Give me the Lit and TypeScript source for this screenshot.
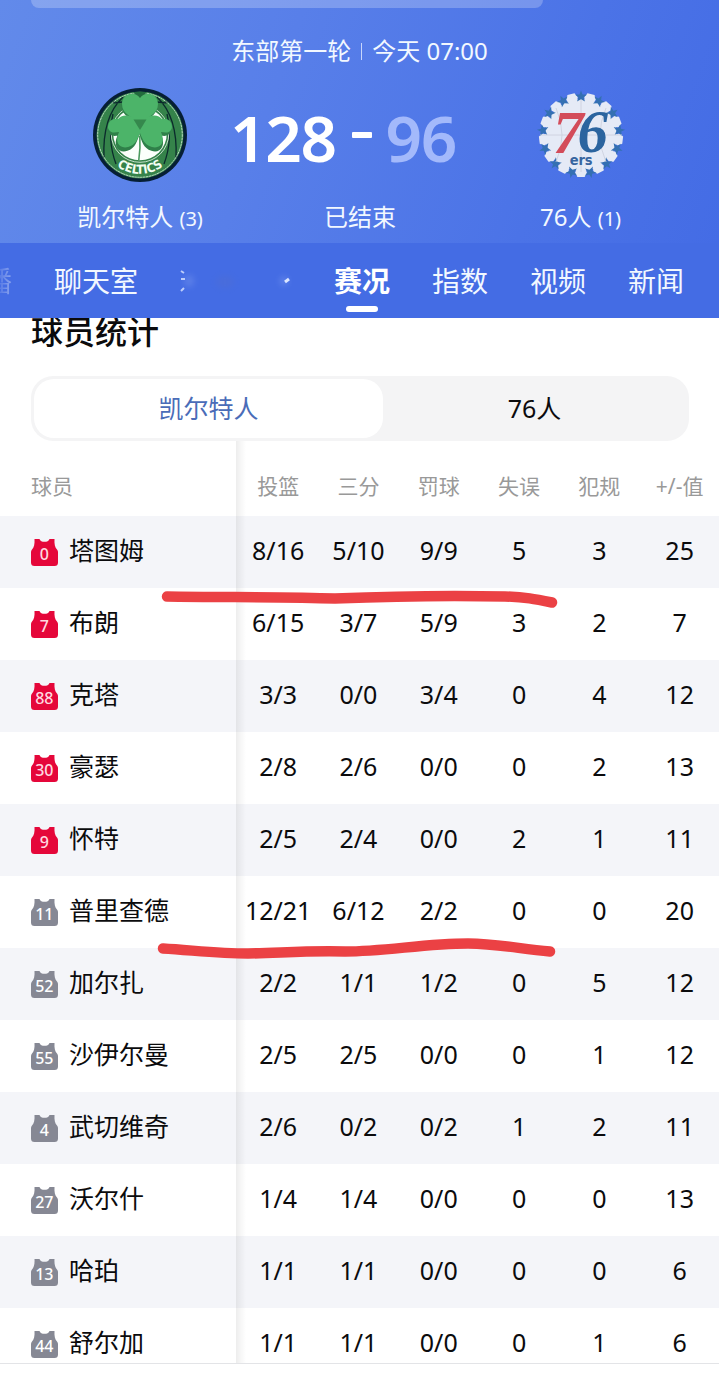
import { LitElement, css, html, svg } from 'lit';
import { customElement, property } from 'lit/decorators.js';
import { classMap } from 'lit/directives/class-map.js';

interface Player {
  num: number;
  name: string;
  stats: string[];
  starter?: boolean;
}

const COLUMNS = ['投篮', '三分', '罚球', '失误', '犯规', '+/-值'];

const PLAYERS: Player[] = [
  { num: 0, name: '塔图姆', stats: ['8/16', '5/10', '9/9', '5', '3', '25'], starter: true },
  { num: 7, name: '布朗', stats: ['6/15', '3/7', '5/9', '3', '2', '7'], starter: true },
  { num: 88, name: '克塔', stats: ['3/3', '0/0', '3/4', '0', '4', '12'], starter: true },
  { num: 30, name: '豪瑟', stats: ['2/8', '2/6', '0/0', '0', '2', '13'], starter: true },
  { num: 9, name: '怀特', stats: ['2/5', '2/4', '0/0', '2', '1', '11'], starter: true },
  { num: 11, name: '普里查德', stats: ['12/21', '6/12', '2/2', '0', '0', '20'] },
  { num: 52, name: '加尔扎', stats: ['2/2', '1/1', '1/2', '0', '5', '12'] },
  { num: 55, name: '沙伊尔曼', stats: ['2/5', '2/5', '0/0', '0', '1', '12'] },
  { num: 4, name: '武切维奇', stats: ['2/6', '0/2', '0/2', '1', '2', '11'] },
  { num: 27, name: '沃尔什', stats: ['1/4', '1/4', '0/0', '0', '0', '13'] },
  { num: 13, name: '哈珀', stats: ['1/1', '1/1', '0/0', '0', '0', '6'] },
  { num: 44, name: '舒尔加', stats: ['1/1', '1/1', '0/0', '0', '1', '6'] },
];

@customElement('celtics-logo')
export class CelticsLogo extends LitElement {
  render() {
    return html`
      <svg viewBox="8 8 94 94" width="94" height="94">
        <circle cx="55" cy="55" r="47" fill="#061f35" />
        <circle cx="55" cy="55" r="43.5" fill="#35834a" />
        <g fill="none" stroke="#0b2b2c" stroke-width="1.3">
          <path d="M38 17 Q17 37 19 78 M30 21 Q24 24 38 22" />
          <path d="M72 17 Q93 37 91 78 M80 21 Q86 24 72 22" />
          <path d="M28 34 Q22 60 31 84 M82 34 Q88 60 79 84" />
        </g>
        <circle cx="55" cy="55" r="42.3" fill="none" stroke="#dff0e2" stroke-width="0.8" stroke-dasharray="2.4 0.5" />
        <circle cx="55" cy="53.5" r="28.8" fill="#35834a" stroke="#e9f5ea" stroke-width="0.8" />
        <circle cx="55" cy="53.500" r="26.8" fill="#fbfffb" />
        <g fill="#2f8049" transform="translate(-0.6 1.8)">
          <path d="M55 18 C49 10 37 14 37 24 C37 34 47 37 55 42 C63 37 73 34 73 24 C73 14 61 10 55 18Z" />
          <path d="M55 46 C46 32 36 35 33 40 C25 40 21 48 25 52 C28 55 31 54 33 54 C28 65 35 72 43 69 C51 67 53 58 55 53Z" />
          <path d="M55 46 C64 32 74 35 77 40 C85 40 89 48 85 52 C82 55 79 54 77 54 C82 65 75 72 67 69 C59 67 57 58 55 53Z" />
        </g>
        <path d="M48 12 H62 L55 19Z" fill="#226b3d" />
        <g fill="#4cb469">
          <path d="M55 18 C49 10 37 14 37 24 C37 34 47 36 48 40 H62 C63 36 73 34 73 24 C73 14 61 10 55 18Z" />
          <path d="M55 44 C46 32 36 35 33 39 C25 37 21 46 24 50 C27 54 31 52 34 52 C29 63 35 69 43 67 C51 65 53 58 55 53Z" />
          <path d="M55 44 C64 32 74 35 77 39 C85 37 89 46 86 50 C83 54 79 52 76 52 C81 63 75 69 67 67 C59 65 57 58 55 53Z" />
        </g>
        <path d="M48.5 39.5 H61.5 L55 50Z" fill="#35884d" />
        <path d="M54.8 56 Q55.6 68 53.8 80" fill="none" stroke="#4a9a5e" stroke-width="1.6" />
        <path id="arc" d="M16.500 62 A39.200 39.200 0 0 0 93.500 62" fill="none" />
        <text class="word"><textPath href="#arc" startOffset="50%" text-anchor="middle">CELTICS</textPath></text>
      </svg>
    `;
  }

  static styles = css`
    :host,
    svg {
      display: block;
    }

    .word {
      font: bold 12.5px 'DejaVu Sans Condensed', 'Liberation Sans', sans-serif;
      fill: #f4fff4;
    }
  `;
}

@customElement('sixers-logo')
export class SixersLogo extends LitElement {
  render() {
    const step = 360 / 13;
    const spots = Array.from({ length: 13 }, (_, i) => i * step);
    return html`
      <svg viewBox="8 8 94 94" width="94" height="94">
        <circle cx="55" cy="55" r="36" fill="#e5eaf6" />
        ${spots.map(
          (a) => svg`<path transform="rotate(${a + step / 2} 55 55) translate(55 18)" fill="#e5eaf6"
            d="M-3.6 -5 H3.6 L6 -1 L4 4 L7 8 H-7 L-4 4 L-6 -1Z" />`,
        )}
        ${spots.map(
          (a) => svg`<path transform="rotate(${a} 55 55) translate(55 16.6)" fill="#3470b2"
            d="M0 -6 L1.5 -2 L6 -2 L2.5 0.8 L4 5 L0 2.6 L-4 5 L-2.5 0.8 L-6 -2 L-1.500 -2Z" />`,
        )}
        <g fill="none" stroke="#cdd1df" stroke-width="0.9">
          <path d="M55 20 V92 M14 55 H96" />
          <path d="M30 28 Q42 55 30 82 M80 28 Q68 55 80 82" />
        </g>
        <text class="num red" x="27" y="72.5">7</text>
        <text class="num blue" x="51.5" y="72">6</text>
        <text class="ers" x="55" y="85" text-anchor="middle">ers</text>
      </svg>
    `;
  }

  static styles = css`
    :host,
    svg {
      display: block;
    }

    .num {
      font: italic bold 61px 'Liberation Serif', serif;
    }

    .red {
      fill: #d34c5a;
    }

    .blue {
      fill: #2b649f;
    }

    .ers {
      font: bold 14.5px 'DejaVu Sans Condensed', 'Liberation Sans', sans-serif;
      letter-spacing: -0.2px;
      fill: #3765a0;
    }
  `;
}

@customElement('jersey-badge')
export class JerseyBadge extends LitElement {
  @property({ type: Number })
  num = 0;

  @property({ type: Boolean })
  starter = false;

  render() {
    return html`
      <svg class=${classMap({ starter: this.starter })} viewBox="0 0 27 27" width="27" height="27">
        <path
          d="M3.5 0 H8.5 C9.5 3.8 17.5 3.8 18.5 0 H23.5 C23.2 5 24 8.5 26 10.5 Q27 11.5 27 13 V23.5 Q27 27 23.5 27 H3.5 Q0 27 0 23.5 V13 Q0 11.5 1 10.5 C3 8.5 3.8 5 3.5 0Z"
        />
        <text x="13.3" y="21" text-anchor="middle">${this.num}</text>
      </svg>
    `;
  }

  static styles = css`
    :host,
    svg {
      display: block;
    }

    path {
      fill: #868894;
    }

    .starter path {
      fill: #e5073a;
    }

    text {
      font: 500 16px 'Noto Sans', sans-serif;
      fill: #fff;
    }

    .starter text {
      fill: #ffd9e0;
    }
  `;
}

@customElement('app-root')
export class AppRoot extends LitElement {
  render() {
    return html`
      <header class="hero">
        <div class="search"></div>
        <div class="round"><span>东部第一轮</span><i class="sep"></i><span>今天 07:00</span></div>
        <div class="match">
          <div class="team">
            <celtics-logo></celtics-logo>
            <div class="team-name">凯尔特人 <small>(3)</small></div>
          </div>
          <div class="middle">
            <div class="score"><b>128</b><i class="dash"></i><b class="lost">96</b></div>
            <div class="state">已结束</div>
          </div>
          <div class="team">
            <sixers-logo></sixers-logo>
            <div class="team-name">76人 <small>(1)</small></div>
          </div>
        </div>
      </header>

      <nav class="tabs">
        <span class="tab cut">播</span>
        <span class="tab">聊天室</span>
        ${this._smudge()}
        <span class="tab active">赛况</span>
        <span class="tab">指数</span>
        <span class="tab">视频</span>
        <span class="tab">新闻</span>
      </nav>

      <main>
        <h2>球员统计</h2>
        <div class="switch">
          <span class="option selected">凯尔特人</span>
          <span class="option">76人</span>
        </div>
        <section class="table">
          <div class="row head">
            <span class="player">球员</span>
            ${COLUMNS.map((c) => html`<span>${c}</span>`)}
          </div>
          ${PLAYERS.map((p) => this._row(p))}
          <div class="edge"></div>
          ${this._marks()}
        </section>
      </main>
    `;
  }

  private _row(p: Player) {
    return html`
      <div class="row">
        <span class="player">
          <jersey-badge .num=${p.num} .starter=${!!p.starter}></jersey-badge>
          ${p.name}
        </span>
        ${p.stats.map((s) => html`<span>${s}</span>`)}
      </div>
    `;
  }

  // The wiped-out tab: only a few corners of the label remain
  private _smudge() {
    return html`
      <svg class="smudge" viewBox="0 0 112 40" width="112" height="40">
        <defs>
          <filter id="soft" x="-50%" y="-50%" width="200%" height="200%"><feGaussianBlur stdDeviation="0.7" /></filter>
          <filter id="haze" x="-50%" y="-50%" width="200%" height="200%"><feGaussianBlur stdDeviation="3" /></filter>
        </defs>
        <g filter="url(#haze)" opacity="0.25">
          <ellipse cx="9" cy="20" rx="5" ry="6" fill="#a5bbf5" />
          <ellipse cx="45" cy="21" rx="9" ry="6" fill="#5a6fc0" />
          <ellipse cx="104" cy="20" rx="4" ry="4" fill="#c0d0fa" />
        </g>
        <g filter="url(#soft)" stroke="#dbe6ff" stroke-width="2" fill="none">
          <path d="M1 10 L4 12 M1 18 L5 18 M1 30 L4 27" opacity="0.8" />
          <path d="M105 21 L109 18" stroke-width="3" />
        </g>
      </svg>
    `;
  }

  // Hand-drawn red underlines over the table, in table coordinates
  private _marks() {
    return html`
      <svg class="marks" viewBox="0 0 719 922" width="719" height="922">
        <path d="M167 155.500 C220 156.500 285 155.500 335 157.500 C385 155.500 460 154.500 505 155.500 C525 156 535 158 552 161.500" />
        <path d="M163 507.500 C195 509.500 220 512.500 248 512.500 C280 512 305 509.500 345 510.500 C385 510.500 425 502.500 468 502.500 C500 503 520 508 550 510.500" />
      </svg>
    `;
  }

  static styles = css`
    :host {
      display: flex;
      flex-direction: column;
      width: 719px;
      height: 1379px;
      overflow: hidden;
      background: #fff;
      color: #0b0b0d;
      font-family: 'Noto Sans', 'Noto Sans CJK SC', sans-serif;
    }

    .hero {
      height: 243px;
      flex: none;
      background: linear-gradient(110deg, #628aea 0%, #587fe9 38%, #4b73e7 75%, #446ce5 100%);
      color: #f2f8ff;
    }

    .search {
      width: 512px;
      height: 8px;
      margin-left: 31px;
      border-radius: 0 0 18px 18px;
      background: rgba(255, 255, 255, 0.23);
    }

    .round {
      display: flex;
      justify-content: center;
      align-items: center;
      height: 36px;
      margin-top: 25px;
      font-size: 24px;
      line-height: 36px;
    }

    .sep {
      width: 1px;
      height: 17px;
      margin: 0 10px;
      background: #c8d6fb;
    }

    .match {
      display: grid;
      grid-template-columns: 280px 160px 281px;
      margin-top: 19px;
    }

    .team {
      display: flex;
      flex-direction: column;
      align-items: center;
    }

    .team-name,
    .state {
      margin-top: 17px;
      font-size: 24px;
      line-height: 36px;
      white-space: nowrap;
    }

    .team-name small {
      font-size: 20px;
    }

    .middle {
      display: flex;
      flex-direction: column;
      align-items: center;
    }

    .score {
      display: flex;
      align-items: center;
      justify-content: center;
      height: 94px;
      margin-left: -34px;
      font-size: 64px;
      line-height: 94px;
      color: #fff;
    }

    .score b {
      padding-top: 6px;
      font-weight: 600;
      letter-spacing: -1.4px;
    }

    .score .lost {
      color: #a3b9fb;
    }

    .dash {
      width: 20px;
      height: 6px;
      margin: 0 14px 0 16px;
      border-radius: 1px;
      background: #fff;
    }

    .tabs {
      display: flex;
      gap: 42px;
      height: 75px;
      flex: none;
      background: #446ce4;
      color: #f2f8ff;
      font-size: 28px;
      line-height: 76px;
    }

    .tab {
      white-space: nowrap;
    }

    .cut {
      margin-left: -16px;
      color: transparent;
      background: linear-gradient(90deg, rgba(255, 255, 255, 0.1) 55%, rgba(255, 255, 255, 0.4));
      background-clip: text;
      -webkit-background-clip: text;
    }

    .smudge {
      align-self: center;
      flex: none;
    }

    .active {
      display: flex;
      flex-direction: column;
      align-items: center;
      font-weight: 700;
      color: #fff;
    }

    .active::after {
      content: '';
      width: 32px;
      height: 6px;
      margin-top: -13px;
      border-radius: 3px;
      background: #fff;
    }

    main {
      display: flex;
      flex-direction: column;
      height: 1045px;
      flex: none;
      overflow: hidden;
      border-bottom: 1px solid #e3e4e7;
    }

    h2 {
      flex: none;
      height: 58px;
      margin: 0;
      padding-left: 31px;
      font-size: 32px;
      font-weight: 500;
      line-height: 28px;
    }

    .switch {
      display: grid;
      grid-template-columns: 1fr 303px;
      flex: none;
      height: 65px;
      margin: 0 30px 0 31px;
      padding: 3px;
      box-sizing: border-box;
      border-radius: 22px;
      background: #f4f4f5;
    }

    .option {
      border-radius: 20px;
      font-size: 25px;
      line-height: 58px;
      text-align: center;
    }

    .selected {
      background: #fff;
      color: #4a6cb8;
    }

    .table {
      position: relative;
      flex: none;
      height: 922px;
      overflow: hidden;
    }

    .row {
      display: grid;
      grid-template-columns: 238px repeat(6, 80.3px);
      height: 72px;
      font-size: 25px;
      line-height: 68px;
      text-align: center;
      white-space: nowrap;
    }

    .row:nth-child(even) {
      background: #f4f5f9;
    }

    .player {
      display: flex;
      gap: 11px;
      padding-left: 31px;
    }

    .player jersey-badge {
      margin-top: 23px;
    }

    .head {
      height: 75px;
      font-size: 21px;
      line-height: 91px;
      color: #999;
    }

    .edge {
      position: absolute;
      top: 0;
      bottom: 0;
      left: 236px;
      width: 10px;
      background: linear-gradient(90deg, rgba(0, 0, 0, 0.07), rgba(0, 0, 0, 0.04) 40%, transparent);
    }

    .marks {
      position: absolute;
      top: 0;
      left: 0;
      fill: none;
      stroke: #eb4144;
      stroke-width: 10.5;
      stroke-linecap: round;
    }
  `;
}

declare global {
  interface HTMLElementTagNameMap {
    'app-root': AppRoot;
    'celtics-logo': CelticsLogo;
    'sixers-logo': SixersLogo;
    'jersey-badge': JerseyBadge;
  }
}
